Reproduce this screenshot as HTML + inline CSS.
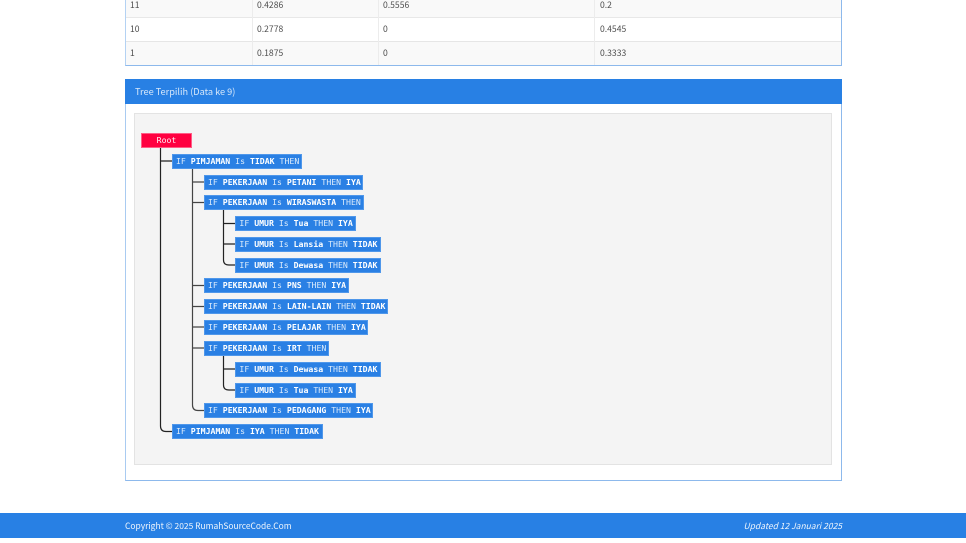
<!DOCTYPE html>
<html><head><meta charset="utf-8"><style>
html,body{margin:0;padding:0;background:#fff}
body{width:966px;height:543px;position:relative;overflow:hidden;font-family:"Noto Sans CJK JP","Liberation Sans",sans-serif;color:#555}
div{position:absolute;box-sizing:border-box}
.t{font-size:8.6px;line-height:12px;color:#4d4d4d;white-space:nowrap}
.n{height:14.8px;background:#2a80e4;border:1px solid #4f97ea;color:#dcebfb;font:8.2px/13px "DejaVu Sans Mono",monospace;padding-left:3px;white-space:pre}
.n b{color:#fff;font-weight:bold}
</style></head><body>
<div style="left:125px;top:-2px;width:717px;height:68px;border:1px solid #8db9ec;border-top:0;border-left-color:#b4d2f3"></div>
<div style="left:126px;top:0;width:715px;height:17px;background:#f9f9f9"></div>
<div style="left:126px;top:17px;width:715px;height:1px;background:#e8e8e8"></div>
<div style="left:126px;top:41px;width:715px;height:1px;background:#e6e6e6"></div>
<div style="left:126px;top:42px;width:715px;height:23px;background:#f9f9f9"></div>
<div style="left:252px;top:0;width:1px;height:65px;background:#ececec"></div>
<div style="left:378px;top:0;width:1px;height:65px;background:#ececec"></div>
<div style="left:594px;top:0;width:1px;height:65px;background:#ececec"></div>
<div class="t" style="left:130px;top:-1px">11</div><div class="t" style="left:257px;top:-1px">0.4286</div><div class="t" style="left:383px;top:-1px">0.5556</div><div class="t" style="left:600px;top:-1px">0.2</div>
<div class="t" style="left:130px;top:23px">10</div><div class="t" style="left:257px;top:23px">0.2778</div><div class="t" style="left:383px;top:23px">0</div><div class="t" style="left:600px;top:23px">0.4545</div>
<div class="t" style="left:130px;top:47px">1</div><div class="t" style="left:257px;top:47px">0.1875</div><div class="t" style="left:383px;top:47px">0</div><div class="t" style="left:600px;top:47px">0.3333</div>

<div style="left:125px;top:79px;width:717px;height:402px;border:1px solid #8db9ec;border-left-color:#a9cbf1;background:#fff"></div>
<div style="left:125px;top:79px;width:717px;height:25px;background:#2880e4;color:#d6e7fa;font-size:9.2px;line-height:24px;padding-left:10px">Tree Terpilih (Data ke 9)</div>
<div style="left:134px;top:113px;width:698px;height:352px;background:#f4f4f4;border:1px solid #e3e3e3"></div>

<svg style="position:absolute;left:0;top:0" width="966" height="543" fill="none" stroke="#222" stroke-width="1.2">
<path d="M160.5 147V161H172M160.500 161V426Q160.500 431.500 166 431.500H172"/>
<path d="M192.500 168V182H204M192.500 182V202.500H204M192.500 202.500V285.500H204M192.500 285.500V306.500H204M192.500 306.500V327H204M192.500 327V348H204M192.500 348V405Q192.500 410.500 198 410.500H204" stroke="#444"/>
<path d="M223.500 209V223.500H236M223.500 223.500V244H236M223.500 244V260Q223.500 265 229 265H236"/>
<path d="M223.500 355V369H236M223.500 369V385Q223.500 390 229 390H236"/>
</svg>

<div style="left:141px;top:133px;width:51px;height:15px;background:#ff0040;border:1px solid #ff5c85;color:#fff0f4;font:8.2px/13px 'DejaVu Sans Mono',monospace;text-align:center">Root</div>
<div class="n" style="left:172px;top:154px;width:130px">IF <b>PIMJAMAN</b> Is <b>TIDAK</b> THEN</div>
<div class="n" style="left:204px;top:174.8px;width:159px">IF <b>PEKERJAAN</b> Is <b>PETANI</b> THEN <b>IYA</b></div>
<div class="n" style="left:204px;top:195.4px;width:160px">IF <b>PEKERJAAN</b> Is <b>WIRASWASTA</b> THEN</div>
<div class="n" style="left:235.400px;top:216.4px;width:120.400px">IF <b>UMUR</b> Is <b>Tua</b> THEN <b>IYA</b></div>
<div class="n" style="left:235.400px;top:237.2px;width:145.400px">IF <b>UMUR</b> Is <b>Lansia</b> THEN <b>TIDAK</b></div>
<div class="n" style="left:235.400px;top:258px;width:145.400px">IF <b>UMUR</b> Is <b>Dewasa</b> THEN <b>TIDAK</b></div>
<div class="n" style="left:204px;top:278.4px;width:145px">IF <b>PEKERJAAN</b> Is <b>PNS</b> THEN <b>IYA</b></div>
<div class="n" style="left:204px;top:299.4px;width:184px">IF <b>PEKERJAAN</b> Is <b>LAIN-LAIN</b> THEN <b>TIDAK</b></div>
<div class="n" style="left:204px;top:320.4px;width:164px">IF <b>PEKERJAAN</b> Is <b>PELAJAR</b> THEN <b>IYA</b></div>
<div class="n" style="left:204px;top:341.2px;width:125px">IF <b>PEKERJAAN</b> Is <b>IRT</b> THEN</div>
<div class="n" style="left:235.400px;top:362px;width:145.400px">IF <b>UMUR</b> Is <b>Dewasa</b> THEN <b>TIDAK</b></div>
<div class="n" style="left:235.400px;top:382.8px;width:120.400px">IF <b>UMUR</b> Is <b>Tua</b> THEN <b>IYA</b></div>
<div class="n" style="left:204px;top:403.4px;width:169px">IF <b>PEKERJAAN</b> Is <b>PEDAGANG</b> THEN <b>IYA</b></div>
<div class="n" style="left:172px;top:424.4px;width:151px">IF <b>PIMJAMAN</b> Is <b>IYA</b> THEN <b>TIDAK</b></div>

<div style="left:0;top:513px;width:966px;height:25px;background:#2880e4"></div>
<div style="left:125px;top:513px;height:25px;color:#f0f6fd;font-size:8.45px;line-height:26px;white-space:nowrap">Copyright © 2025 RumahSourceCode.Com</div>
<div style="right:124px;top:513px;height:25px;color:#f0f6fd;font-size:8.5px;line-height:26px;font-style:italic;white-space:nowrap">Updated 12 Januari 2025</div>
</body></html>
